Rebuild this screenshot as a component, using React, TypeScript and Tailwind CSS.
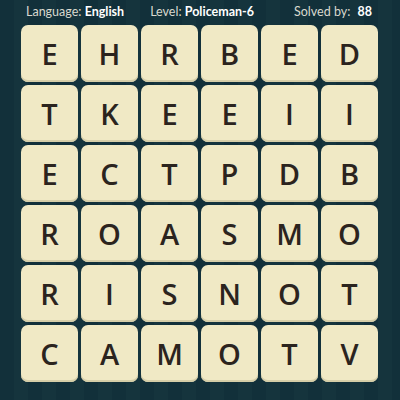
const rows = [
  ["E", "H", "R", "B", "E", "D"],
  ["T", "K", "E", "E", "I", "I"],
  ["E", "C", "T", "P", "D", "B"],
  ["R", "O", "A", "S", "M", "O"],
  ["R", "I", "S", "N", "O", "T"],
  ["C", "A", "M", "O", "T", "V"],
];

export default function App() {
  return (
    <main className="w-[400px] h-[400px] overflow-hidden bg-[#133039] bg-[repeating-linear-gradient(90deg,#12303a_0px,#12303a_14px,#15343d_14px,#15343d_28px)] font-['Lato','Open_Sans',sans-serif]">
      <header className="h-[25px] flex items-center pl-[26px] pr-[28px] text-[12.5px] text-[#d9d9cf]">
        <span>
          Language: <b className="text-white font-bold">English</b>
        </span>
        <span className="ml-[26px]">
          Level: <b className="text-white font-bold">Policeman-6</b>
        </span>
        <span className="ml-auto">
          Solved by: <b className="text-white font-bold ml-[4px]">88</b>
        </span>
      </header>
      <div className="grid grid-cols-[repeat(6,57px)] gap-[3px] pl-[21px]">
        {rows.flat().map((ch, i) => (
          <div
            key={i}
            className="h-[57px] rounded-[7px] bg-[#f0e9c5] shadow-[inset_0_-2px_0_#d6cea8] flex items-center justify-center text-[29px] font-semibold text-[#2b241e] font-['Open_Sans',sans-serif]"
          >
            {ch}
          </div>
        ))}
      </div>
    </main>
  );
}
